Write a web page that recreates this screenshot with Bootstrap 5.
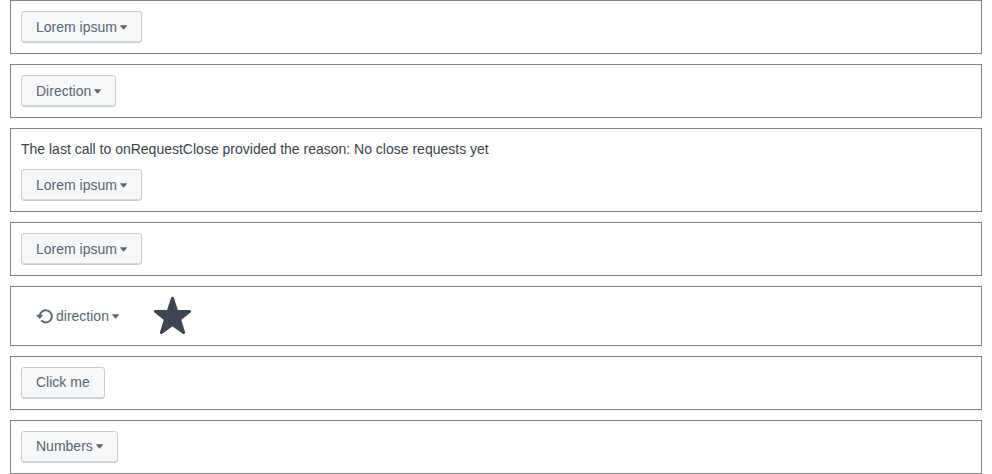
<!DOCTYPE html>
<html lang="en">
<head>
<meta charset="utf-8">
<meta name="viewport" content="width=device-width, initial-scale=1">
<title>Dropdown examples</title>
<link href="https://cdn.jsdelivr.net/npm/bootstrap@5.3.0/dist/css/bootstrap.min.css" rel="stylesheet">
<style>
body { font: 14px/20px "Liberation Sans", Arial, sans-serif; color: #3a444e; background: #fff; overflow: hidden; }
.examples { gap: 10px; padding: 0 10px; }
.example { border: 1px solid gray; padding: 10px; }
.example p { margin-bottom: 10px; }
.btn-default {
  --bs-btn-color: #586573;
  --bs-btn-bg: #f7f8fa;
  --bs-btn-border-color: #c4ccd6;
  --bs-btn-hover-bg: #f0f3f6;
  --bs-btn-hover-border-color: #c4ccd6;
  --bs-btn-border-radius: 3px;
  box-shadow: inset 0 -1px 0 #d3d9e1;
}
.btn-plain { --bs-btn-color: #586573; --bs-btn-border-color: transparent; }
.btn-default, .btn-plain {
  --bs-btn-font-size: 14px;
  --bs-btn-line-height: 20px;
  --bs-btn-padding-x: 14px;
  --bs-btn-padding-y: 5px;
  height: 32px;
}
.btn-raised { padding-top: 4px; padding-bottom: 6px; }
.arrow { width: 8px; height: 5px; margin: 0 -1px 0 3px; }
.reload { width: 18px; height: 16px; margin: 0 2px 0 0; }
.star { width: 38px; height: 38px; margin: -1px 0 1px 20px; }
</style>
</head>
<body>
<main class="examples d-flex flex-column">
  <section class="example d-flex"><button type="button" class="btn btn-default d-inline-flex align-items-center">Lorem ipsum<svg class="arrow" viewBox="0 0 8 5" fill="currentColor"><path d="M.6.3h5.9q.8 0 .3.7L4.1 4.3q-.5.4-1 0L.3 1Q-.2.3.6.3z"/></svg></button></section>
  <section class="example d-flex"><button type="button" class="btn btn-default d-inline-flex align-items-center">Direction<svg class="arrow" viewBox="0 0 8 5" fill="currentColor"><path d="M.6.3h5.9q.8 0 .3.7L4.1 4.3q-.5.4-1 0L.3 1Q-.2.3.6.3z"/></svg></button></section>
  <section class="example">
    <p>The last call to onRequestClose provided the reason: No close requests yet</p>
    <div class="d-flex"><button type="button" class="btn btn-default d-inline-flex align-items-center">Lorem ipsum<svg class="arrow" viewBox="0 0 8 5" fill="currentColor"><path d="M.6.3h5.9q.8 0 .3.7L4.1 4.3q-.5.4-1 0L.3 1Q-.2.3.6.3z"/></svg></button></div>
  </section>
  <section class="example d-flex"><button type="button" class="btn btn-default d-inline-flex align-items-center">Lorem ipsum<svg class="arrow" viewBox="0 0 8 5" fill="currentColor"><path d="M.6.3h5.9q.8 0 .3.7L4.1 4.3q-.5.4-1 0L.3 1Q-.2.3.6.3z"/></svg></button></section>
  <section class="example d-flex align-items-center">
    <button type="button" class="btn btn-plain d-inline-flex align-items-center"><svg class="reload" viewBox="0 0 18 16" fill="none" stroke="currentColor" stroke-width="1.9"><path d="M3.7 8A6.1 6.1 0 1 1 5.2 12.4"/><path d="M.4 7.3q-.1-.6.5-.6h5.4q.8 0 .4.7L4.2 10.5q-.5.5-1 0z" fill="currentColor" stroke="none"/></svg>direction<svg class="arrow" viewBox="0 0 8 5" fill="currentColor"><path d="M.6.3h5.9q.8 0 .3.7L4.1 4.3q-.5.4-1 0L.3 1Q-.2.3.6.3z"/></svg></button>
    <svg class="star" viewBox="0 0 38 38" fill="#3e4751" stroke="#3e4751" stroke-width="3" stroke-linejoin="round"><path d="M18.5 2.3L22.8 15.4H35.6L25.6 23.4 29.6 36.5 18.5 28.6 7.4 36.5 11.4 23.4 1.4 15.4H14.2z"/></svg>
  </section>
  <section class="example d-flex"><button type="button" class="btn btn-default btn-raised d-inline-flex align-items-center">Click me</button></section>
  <section class="example d-flex"><button type="button" class="btn btn-default btn-raised d-inline-flex align-items-center">Numbers<svg class="arrow" viewBox="0 0 8 5" fill="currentColor"><path d="M.6.3h5.9q.8 0 .3.7L4.1 4.3q-.5.4-1 0L.3 1Q-.2.3.6.3z"/></svg></button></section>
</main>
<script src="https://cdn.jsdelivr.net/npm/bootstrap@5.3.0/dist/js/bootstrap.bundle.min.js"></script>
</body>
</html>
